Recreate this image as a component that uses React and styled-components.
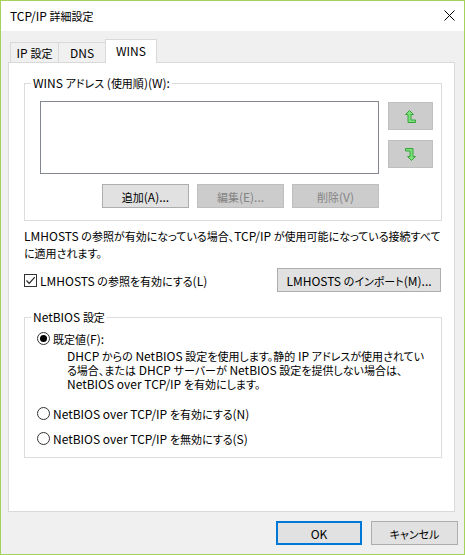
import styled, { createGlobalStyle } from "styled-components";

const GlobalStyle = createGlobalStyle`
  html, body { margin: 0; padding: 0; background: #ffffff; }
  body {
    font-family: "Noto Sans CJK JP", "Noto Sans", sans-serif;
    font-size: 12px;
    color: #000;
  }
  * { box-sizing: border-box; }
`;

// Japanese runs are set a little narrower, like the UI font of the dialog
const Cjk = styled.span`
  font-size: 11px;
  line-height: 1;
  font-feature-settings: "palt";
`;

const CJK_RUN = /([\u3000-\u30ff\u3400-\u9fff\uff00-\uffef]+)/;

function Jp({ children }) {
  return (
    <span>
      {String(children)
        .split(CJK_RUN)
        .map((part, i) => (i % 2 ? <Cjk key={i}>{part}</Cjk> : part))}
    </span>
  );
}

const Window = styled.div`
  width: 465px;
  height: 555px;
  border: 1px solid #a4d25a;
  background: #f0f0f0;
  display: flex;
  flex-direction: column;
`;

const TitleBar = styled.div`
  height: 30px;
  background: #ffffff;
  display: flex;
  align-items: center;
  justify-content: space-between;
  padding: 0 9px 1px 9px;
  white-space: nowrap;
`;

const Body = styled.div`
  flex: 1;
  display: flex;
  flex-direction: column;
  padding: 8px 6px 9px 7px;
`;

const TabRow = styled.div`
  display: flex;
  align-items: flex-start;
  height: 24px;
  margin-bottom: -1px;
  padding-left: 2px;
  position: relative;
  z-index: 1;
`;

const Tab = styled.div`
  width: ${(p) => p.$w}px;
  height: ${(p) => (p.$active ? 24 : 20)}px;
  margin-top: ${(p) => (p.$active ? 0 : 3)}px;
  margin-left: -1px;
  &:first-child { margin-left: 0; }
  border: 1px solid #d9d9d9;
  border-bottom: none;
  background: ${(p) => (p.$active ? "#ffffff" : "#f0f0f0")};
  display: flex;
  align-items: center;
  justify-content: center;
  padding-bottom: ${(p) => (p.$active ? 3 : 0)}px;
  white-space: nowrap;
`;

const Panel = styled.div`
  flex: 1;
  margin-right: 3px;
  background: #ffffff;
  border: 1px solid #d9d9d9;
  padding: 12px 12px 0 15px;
  display: flex;
  flex-direction: column;
`;

const Group = styled.fieldset`
  margin: ${(p) => p.$mt || 0}px 0 0 0;
  padding: 0;
  min-width: 0;
  border: 1px solid #dcdcdc;
`;

const GroupLabel = styled.legend`
  margin-left: 6px;
  padding: 0 2px;
  line-height: 16px;
  white-space: nowrap;
`;

const WinsContent = styled.div`
  display: grid;
  grid-template-columns: 339px 45px;
  column-gap: 9px;
  padding: 10px 8px 12px 15px;
`;

const ListBox = styled.div`
  height: 73px;
  border: 1px solid #828790;
  background: #ffffff;
`;

const ButtonRow = styled.div`
  display: flex;
  justify-content: flex-end;
  gap: 8px;
  margin-top: 10px;
`;

const ArrowColumn = styled.div`
  display: flex;
  flex-direction: column;
  gap: 10px;
  padding-top: 1px;
`;

const Button = styled.button`
  width: ${(p) => p.$w || 87}px;
  height: ${(p) => p.$h || 24}px;
  padding: 0;
  font: inherit;
  display: flex;
  align-items: center;
  justify-content: center;
  white-space: nowrap;
  background: ${(p) => (p.disabled ? "#cccccc" : "#e1e1e1")};
  color: ${(p) => (p.disabled ? "#838383" : "#000000")};
  border: ${(p) =>
    p.$default
      ? "2px solid #0078d7"
      : p.disabled
      ? "1px solid #bfbfbf"
      : "1px solid #adadad"};
`;

const Paragraph = styled.p`
  margin: 6px 0 0 0;
  line-height: 17px;
  white-space: nowrap;
`;

const CheckRow = styled.div`
  display: flex;
  align-items: center;
  justify-content: space-between;
  margin-top: 7px;
  padding-right: 1px;
`;

const CheckLabel = styled.label`
  display: flex;
  align-items: center;
  gap: 3px;
  white-space: nowrap;
`;

const Box = styled.span`
  width: 13px;
  height: 13px;
  border: 1px solid #333333;
  background: #ffffff;
  display: flex;
  align-items: center;
  justify-content: center;
`;

const NetContent = styled.div`
  padding: 5px 8px 11px 12px;
`;

const RadioRow = styled.label`
  display: flex;
  align-items: center;
  gap: 3px;
  height: 16px;
  margin-top: ${(p) => p.$mt || 0}px;
  white-space: nowrap;
`;

const Circle = styled.span`
  width: 13px;
  height: 13px;
  border-radius: 50%;
  border: 1px solid #333333;
  background: #ffffff;
  display: flex;
  align-items: center;
  justify-content: center;
  &::after {
    content: "";
    width: 7px;
    height: 7px;
    border-radius: 50%;
    background: ${(p) => (p.$on ? "#000000" : "transparent")};
  }
`;

const Description = styled.p`
  margin: 3px 0 0 30px;
  line-height: 14px;
  white-space: nowrap;
`;

const Footer = styled.div`
  display: flex;
  justify-content: flex-end;
  gap: 9px;
  margin-top: 9px;
`;

function Arrow({ down }) {
  return (
    <svg width="11" height="13" viewBox="0 0 11 13">
      <g transform={down ? "rotate(180 5.5 6.5)" : undefined}>
        <polygon
          points="4.5,0.5 8.5,4.5 6,4.5 6,10 10.5,10 10.5,12.5 3,12.5 3,4.5 0.5,4.5"
          fill="#7be27b"
          stroke="#3aa23a"
          strokeWidth="1"
        />
      </g>
    </svg>
  );
}

export default function App() {
  return (
    <>
      <GlobalStyle />
      <Window>
        <TitleBar>
          <Jp>TCP/IP 詳細設定</Jp>
          <svg width="11" height="11" viewBox="0 0 11 11">
            <path d="M0.5 0.5 L10.5 10.5 M10.5 0.5 L0.5 10.5" stroke="#000" strokeWidth="1" />
          </svg>
        </TitleBar>
        <Body>
          <TabRow>
            <Tab $w={49}><Jp>IP 設定</Jp></Tab>
            <Tab $w={48}>DNS</Tab>
            <Tab $w={52} $active>WINS</Tab>
          </TabRow>
          <Panel>
            <Group>
              <GroupLabel><Jp>WINS アドレス (使用順)(W):</Jp></GroupLabel>
              <WinsContent>
                <div>
                  <ListBox />
                  <ButtonRow>
                    <Button><Jp>追加(A)...</Jp></Button>
                    <Button disabled><Jp>編集(E)...</Jp></Button>
                    <Button disabled><Jp>削除(V)</Jp></Button>
                  </ButtonRow>
                </div>
                <ArrowColumn>
                  <Button disabled $w={45} $h={28}>
                    <Arrow />
                  </Button>
                  <Button disabled $w={45} $h={28}>
                    <Arrow down />
                  </Button>
                </ArrowColumn>
              </WinsContent>
            </Group>
            <Paragraph>
              <Jp>LMHOSTS の参照が有効になっている場合、TCP/IP が使用可能になっている接続すべて</Jp>
              <br />
              <Jp>に適用されます。</Jp>
            </Paragraph>
            <CheckRow>
              <CheckLabel>
                <Box>
                  <svg width="11" height="11" viewBox="0 0 11 11">
                    <path d="M1.5 5.5 L4.2 8.3 L9.8 2.2" fill="none" stroke="#222" strokeWidth="1.2" />
                  </svg>
                </Box>
                <Jp>LMHOSTS の参照を有効にする(L)</Jp>
              </CheckLabel>
              <Button $w={164}><Jp>LMHOSTS のインポート(M)...</Jp></Button>
            </CheckRow>
            <Group $mt={17}>
              <GroupLabel><Jp>NetBIOS 設定</Jp></GroupLabel>
              <NetContent>
                <RadioRow>
                  <Circle $on />
                  <Jp>既定値(F):</Jp>
                </RadioRow>
                <Description>
                  <Jp>DHCP からの NetBIOS 設定を使用します。静的 IP アドレスが使用されてい</Jp>
                  <br />
                  <Jp>る場合、または DHCP サーバーが NetBIOS 設定を提供しない場合は、</Jp>
                  <br />
                  <Jp>NetBIOS over TCP/IP を有効にします。</Jp>
                </Description>
                <RadioRow $mt={14}>
                  <Circle />
                  <Jp>NetBIOS over TCP/IP を有効にする(N)</Jp>
                </RadioRow>
                <RadioRow $mt={9}>
                  <Circle />
                  <Jp>NetBIOS over TCP/IP を無効にする(S)</Jp>
                </RadioRow>
              </NetContent>
            </Group>
          </Panel>
          <Footer>
            <Button $w={86} $default>OK</Button>
            <Button><Jp>キャンセル</Jp></Button>
          </Footer>
        </Body>
      </Window>
    </>
  );
}
